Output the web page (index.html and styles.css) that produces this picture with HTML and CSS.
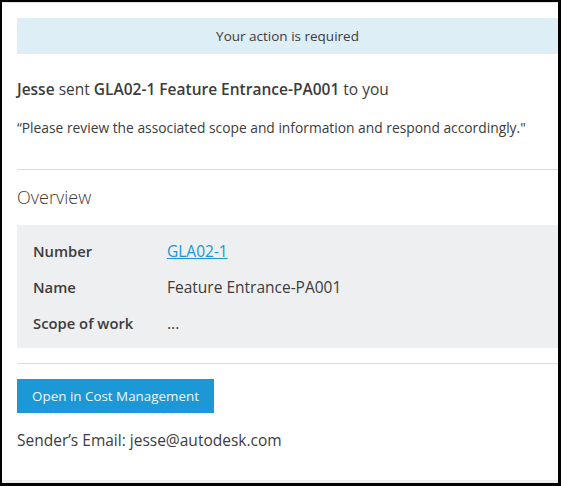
FILE: index.html
```html
<!DOCTYPE html>
<html>
<head>
<meta charset="utf-8">
<link rel="stylesheet" href="styles.css">
</head>
<body>
<div class="frame">
  <div class="topline"></div>
  <div class="content">
    <div class="banner">Your action is required</div>
    <p class="headline"><b>Jesse</b> sent <b>GLA02-1 Feature Entrance-PA001</b> to you</p>
    <p class="quote">“Please review the associated scope and information and respond accordingly."</p>
    <hr class="divider first">
    <h2 class="section">Overview</h2>
    <div class="details">
      <div class="row"><span class="label">Number</span><a class="value link" href="#">GLA02-1</a></div>
      <div class="row"><span class="label">Name</span><span class="value">Feature Entrance-PA001</span></div>
      <div class="row"><span class="label">Scope of work</span><span class="value">...</span></div>
    </div>
    <hr class="divider second">
    <a class="button" href="#">Open in Cost Management</a>
    <p class="email">Sender’s Email: jesse@autodesk.com</p>
  </div>
  <div class="footer"></div>
</div>
</body>
</html>
```
FILE: styles.css
```css
html, body {
  margin: 0;
  padding: 0;
  background: #000;
}
.frame {
  box-sizing: border-box;
  width: 561px;
  height: 486px;
  border-style: solid;
  border-color: #000;
  border-width: 2px 3px 3px 2px;
  background: #fff;
  display: flex;
  flex-direction: column;
  font-family: "Open Sans", "Noto Sans", sans-serif;
  color: #3c3c3c;
}
.topline {
  height: 1px;
  background: #e6e6e6;
}
.content {
  flex: 1;
  padding: 15px 0 0 15px;
  display: flex;
  flex-direction: column;
}
.banner {
  height: 36px;
  background: #ddeef7;
  display: flex;
  align-items: center;
  justify-content: center;
  font-size: 13.5px;
  color: #3c3c3c;
}
.headline {
  margin: 25px 0 0 0;
  font-size: 15.5px;
  line-height: 20px;
}
.headline b {
  font-weight: 600;
}
.quote {
  margin: 20px 0 0 0;
  font-size: 13.8px;
  line-height: 18px;
}
.divider {
  border: 0;
  height: 1px;
  background: #dcdcdc;
  margin: 0;
}
.divider.first {
  margin-top: 32px;
}
.section {
  margin: 16px 0 0 0;
  font-size: 18px;
  font-weight: 300;
  line-height: 22px;
}
.details {
  margin-top: 17px;
  background: #eeeff1;
  padding: 8px 0 7px 16px;
  display: flex;
  flex-direction: column;
}
.row {
  display: flex;
  height: 36px;
  align-items: center;
  font-size: 15.5px;
}
.label {
  width: 134px;
  font-weight: 600;
  font-size: 14.8px;
}
.value {
  color: #3c3c3c;
}
.link {
  color: #1b96d4;
  text-decoration: underline;
}
.divider.second {
  margin-top: 15px;
}
.button {
  margin-top: 15px;
  align-self: flex-start;
  width: 197px;
  height: 34px;
  box-sizing: border-box;
  background: #1d98d6;
  color: #eef6fb;
  font-size: 13.4px;
  display: flex;
  align-items: center;
  justify-content: center;
  text-decoration: none;
}
.email {
  margin: 18px 0 0 0;
  font-size: 15.5px;
  line-height: 18px;
}
.footer {
  height: 3px;
  background: #eeeeee;
}
```
